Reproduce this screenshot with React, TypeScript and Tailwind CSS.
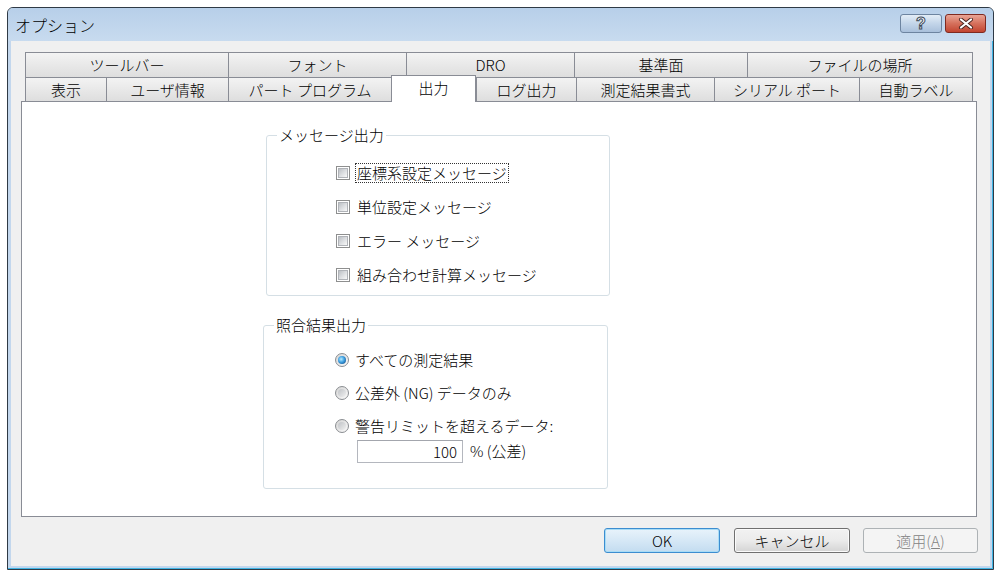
import React from "react";

const ROW1 = [
  { label: "ツールバー", w: "w-[203px]" },
  { label: "フォント", w: "w-[178px]" },
  { label: "DRO", w: "w-[168px]" },
  { label: "基準面", w: "w-[173px]" },
  { label: "ファイルの場所", w: "w-[226px]" },
];

const ROW2 = [
  { label: "表示", w: "w-[81px]" },
  { label: "ユーザ情報", w: "w-[122px]" },
  { label: "パート プログラム", w: "w-[163px]" },
  { label: "出力", w: "w-[85px]", selected: true },
  { label: "ログ出力", w: "w-[100px]" },
  { label: "測定結果書式", w: "w-[138px]" },
  { label: "シリアル ポート", w: "w-[145px]" },
  { label: "自動ラベル", w: "w-[114px]" },
];

const MESSAGES = ["座標系設定メッセージ", "単位設定メッセージ", "エラー メッセージ", "組み合わせ計算メッセージ"];

function Checkbox() {
  return (
    <span className="w-[14px] h-[14px] shrink-0 border border-[#8e8f8f] bg-white p-px flex">
      <span className="flex-1 border border-[#b0b3b8] bg-linear-to-br from-[#bcc0c5] via-[#dcdee1] to-[#f8f8f8]" />
    </span>
  );
}

function Radio({ checked }: { checked?: boolean }) {
  return (
    <span className="w-[14px] h-[14px] shrink-0 rounded-full border border-[#8a8d91] bg-linear-to-br from-[#d4d4d4] to-[#fbfbfb] flex items-center justify-center">
      {checked ? (
        <span className="w-[8px] h-[8px] rounded-full bg-[radial-gradient(circle_at_40%_40%,#b7ecff,#3d9ee0_45%,#0b3f78)]" />
      ) : (
        <span className="w-[8px] h-[8px] rounded-full bg-linear-to-br from-[#bfc2c6] to-[#f0f0f0]" />
      )}
    </span>
  );
}

function GroupBox({ title, className, children }: { title: string; className: string; children: React.ReactNode }) {
  return (
    <div className={`relative border border-[#d5dfe5] rounded-[3px] ${className}`}>
      <span className="absolute -top-[9px] left-[10px] px-[2px] bg-white leading-[16px]">{title}</span>
      {children}
    </div>
  );
}

export default function App() {
  return (
    <div className="w-[1000px] h-[573px] bg-white pt-[7px] pl-[7px] font-['Noto_Sans_CJK_JP',sans-serif] font-light text-black">
      {/* Window */}
      <div className="w-[987px] h-[563px] rounded-t-[6px] border border-[#2f3a45] bg-[#c3d7ed] shadow-[inset_-1px_-1px_0_#3fb4e4] flex flex-col overflow-hidden">
        {/* Title bar */}
        <div className="h-[33px] shrink-0 flex items-start bg-linear-to-b from-[#b7cfe9] to-[#c8dbef]">
          <span className="ml-[7px] mt-[8px] text-[16px] leading-[18px]">オプション</span>
          <div className="ml-auto mr-[7px] mt-[6px] flex gap-[3px]">
            <div className="w-[42px] h-[19px] rounded-[3px] border border-[#6d84a0] bg-linear-to-b from-[#e3edf7] via-[#c3d5e9] to-[#a9c0db] flex items-center justify-center">
              <span className="font-['Liberation_Sans',sans-serif] text-[16px] leading-none font-bold text-white [-webkit-text-stroke:1px_#3d4a5a]">?</span>
            </div>
            <div className="w-[41px] h-[19px] rounded-[3px] border border-[#7f2a20] bg-linear-to-b from-[#e9a596] via-[#d5705c] to-[#c24430] flex items-center justify-center">
              <svg width="16" height="11" viewBox="0 0 16 11">
                <path d="M3 1.5 L13 9.5 M13 1.5 L3 9.5" stroke="#4a2520" strokeWidth="4" strokeLinecap="round" />
                <path d="M3 1.5 L13 9.5 M13 1.5 L3 9.5" stroke="#ffffff" strokeWidth="2.2" strokeLinecap="round" />
              </svg>
            </div>
          </div>
        </div>

        {/* Client area */}
        <div className="mx-[3px] h-[525px] bg-[#f0f0f0] flex flex-col">
          {/* Tab control */}
          <div className="mt-[11px] ml-[10px] w-[956px] flex flex-col">
            <div className="h-[25px] pl-[4px] flex">
              {ROW1.map((t, i) => (
                <div
                  key={t.label}
                  className={`${t.w} h-full border-t border-l border-[#898c95] bg-linear-to-b from-[#f3f3f3] to-[#dedede] flex items-center justify-center pb-[2px] text-[15px] leading-none ${
                    i === ROW1.length - 1 ? "border-r" : ""
                  }`}
                >
                  {t.label}
                </div>
              ))}
            </div>
            <div className="h-[24px] pl-[4px] flex relative z-10">
              {ROW2.map((t, i) =>
                t.selected ? (
                  <div
                    key={t.label}
                    className={`${t.w} h-[27px] -mt-[2px] border-t border-l border-r border-[#898c95] bg-white flex items-start justify-center pt-[4px] text-[15px] leading-none`}
                  >
                    {t.label}
                  </div>
                ) : (
                  <div
                    key={t.label}
                    className={`${t.w} h-full border-t border-l border-[#898c95] bg-linear-to-b from-[#f3f3f3] to-[#dedede] flex items-center justify-center pb-px text-[15px] leading-none ${
                      i === ROW2.length - 1 ? "border-r" : ""
                    }`}
                  >
                    {t.label}
                  </div>
                )
              )}
            </div>

            {/* Tab page */}
            <div className="h-[416px] border border-[#898c95] bg-white flex flex-col text-[15px]">
              {/* Message output */}
              <GroupBox title="メッセージ出力" className="ml-[244px] mt-[33px] w-[344px] h-[161px] pl-[69px] pt-[27px]">
                <div className="flex flex-col gap-[14px]">
                  {MESSAGES.map((m, i) => (
                    <label key={m} className="h-[20px] flex items-center gap-[6px]">
                      <Checkbox />
                      <span className={`px-px leading-[18px] ${i === 0 ? "outline outline-1 outline-dotted outline-[#333]" : ""}`}>{m}</span>
                    </label>
                  ))}
                </div>
              </GroupBox>

              {/* Verification result output */}
              <GroupBox title="照合結果出力" className="ml-[241px] mt-[29px] w-[345px] h-[164px] pl-[71px] pt-[24px]">
                <div className="flex flex-col gap-[13px]">
                  <label className="h-[20px] flex items-center gap-[6px]">
                    <Radio checked />
                    <span>すべての測定結果</span>
                  </label>
                  <label className="h-[20px] flex items-center gap-[6px]">
                    <Radio />
                    <span>公差外 (NG) データのみ</span>
                  </label>
                  <label className="h-[20px] flex items-center gap-[6px]">
                    <Radio />
                    <span>警告リミットを超えるデータ:</span>
                  </label>
                </div>
                <div className="mt-[4px] ml-[22px] flex items-center">
                  <div className="w-[106px] h-[23px] border border-[#b4b7be] border-t-[#a3a6ad] bg-white flex items-center justify-end pr-[5px] leading-none">
                    100
                  </div>
                  <span className="ml-[7px]">% (公差)</span>
                </div>
              </GroupBox>
            </div>
          </div>

          {/* Buttons */}
          <div className="mt-[11px] flex justify-end pr-[12px] text-[15px]">
            <button className="w-[116px] h-[25px] rounded-[3px] border border-[#3c8dd0] bg-linear-to-b from-[#e8f3fb] via-[#d6e8f6] to-[#c3dcf0] shadow-[inset_0_0_0_1px_#a8dcf6] flex items-center justify-center leading-none">
              OK
            </button>
            <button className="ml-[14px] w-[116px] h-[25px] rounded-[3px] border border-[#707070] bg-linear-to-b from-[#f2f2f2] via-[#ebebeb] to-[#d4d4d4] shadow-[inset_0_0_0_1px_#fbfbfb] flex items-center justify-center leading-none">
              キャンセル
            </button>
            <button className="ml-[13px] w-[115px] h-[25px] rounded-[3px] border border-[#adb2b5] bg-[#f4f4f4] text-[#838383] flex items-center justify-center leading-none">
              適用(<u>A</u>)
            </button>
          </div>
        </div>
      </div>
    </div>
  );
}
